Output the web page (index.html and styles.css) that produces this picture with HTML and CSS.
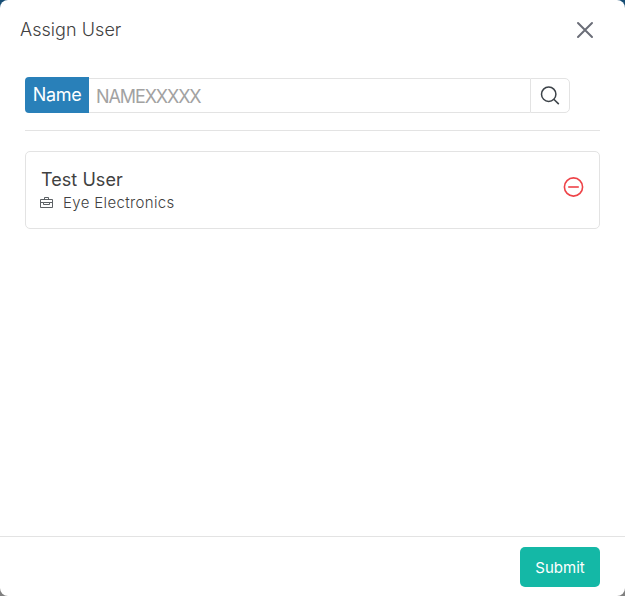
FILE: index.html
```html
<!DOCTYPE html>
<html lang="en">
<head>
<meta charset="utf-8">
<title>Assign User</title>
<link rel="stylesheet" href="styles.css">
</head>
<body>
<section class="modal">
  <header class="modal-header">
    <h1 class="title">Assign User</h1>
    <button class="close" aria-label="Close">
      <svg width="18" height="18" viewBox="0 0 18 18"><path d="M2 2l14 14M16 2L2 16" fill="none" stroke="#6b6e78" stroke-width="2" stroke-linecap="round"/></svg>
    </button>
  </header>
  <main class="modal-body">
    <div class="search">
      <label class="search-label" for="name">Name</label>
      <input class="search-input" id="name" type="text" placeholder="NAMEXXXXX">
      <button class="search-button" aria-label="Search">
        <svg width="20" height="20" viewBox="0 0 20 20"><g fill="none" stroke="#3c4248" stroke-width="1.5"><circle cx="8.7" cy="8.2" r="7.2"/><path d="M13.8 13.3l5 4.8"/></g></svg>
      </button>
    </div>
    <article class="user">
      <div class="details">
        <h2 class="user-name">Test User</h2>
        <p class="company">
          <svg width="13" height="12" viewBox="0 0 13 12"><path d="M.5 2.5h12v8H.5zM4.5 2.5v-2h4v2M1 5.5h2.5v2h6v-2H12M3.5 5.5h6" fill="none" stroke="#4b4f54" stroke-width=".9"/></svg>
          <span>Eye Electronics</span>
        </p>
      </div>
      <button class="remove" aria-label="Remove user">
        <svg width="21" height="20" viewBox="0 0 21 20"><g fill="none" stroke="#ee4348" stroke-width="1.6"><circle cx="10.5" cy="10" r="9.1"/><path d="M5.2 10h10.6"/></g></svg>
      </button>
    </article>
  </main>
  <footer class="modal-footer">
    <button class="submit">Submit</button>
  </footer>
</section>
</body>
</html>
```
FILE: styles.css
```css
* { box-sizing: border-box; }
html { height: 100%; }
body {
  height: 100%;
  margin: 0;
  overflow: hidden;
  background: linear-gradient(#174e75 50%, #808080 50%);
  color: #414141;
  font-family: Inter, "Liberation Sans", sans-serif;
}
h1, h2, p { margin: 0; font-weight: 400; }
button { border: 0; padding: 0; background: none; font: inherit; }
svg { display: block; }
.modal {
  height: 596px;
  display: flex;
  flex-direction: column;
  background: #fff;
  border-radius: 8px;
}
.modal-header {
  height: 60px;
  display: flex;
  align-items: center;
  justify-content: space-between;
  padding: 0 31px 0 20px;
}
.title { font-size: 18px; line-height: 24px; font-weight: 300; letter-spacing: .05px; }
.modal-body { flex: 1; padding: 17px 25px; }
.search {
  height: 54px;
  display: flex;
  align-items: flex-start;
  padding-right: 30px;
  border-bottom: 1px solid #e3e3e3;
}
.search-label {
  width: 64px;
  height: 36px;
  border-radius: 4px 0 0 4px;
  background: #2980b9;
  color: #fff;
  font-size: 18px;
  line-height: 36px;
  letter-spacing: -.3px;
  text-align: center;
}
.search-input {
  flex: 1;
  min-width: 0;
  height: 35px;
  margin-top: 1px;
  padding: 2px 7px 0;
  border: solid #e3e3e3;
  border-width: 1px 0;
  font: 400 18px Inter, "Liberation Sans", sans-serif;
  letter-spacing: -1.1px;
}
.search-input::placeholder { color: #a2a2a2; opacity: 1; }
.search-button {
  width: 40px;
  height: 35px;
  margin-top: 1px;
  display: grid;
  place-items: center;
  border: 1px solid #e3e3e3;
  border-radius: 0 5px 5px 0;
}
.user {
  height: 78px;
  margin-top: 20px;
  padding: 0 15px 0 14px;
  display: flex;
  align-items: center;
  justify-content: space-between;
  border: 1px solid #e3e3e3;
  border-radius: 5px;
}
.details { padding-top: 2px; }
.user-name { padding-left: 1px; font-size: 18px; line-height: 24px; letter-spacing: .05px; }
.company {
  display: flex;
  align-items: center;
  gap: 10px;
  font-size: 15px;
  line-height: 22px;
  font-weight: 300;
  letter-spacing: .35px;
}
.remove { margin-top: -6px; }
.modal-footer {
  height: 60px;
  display: flex;
  justify-content: flex-end;
  padding: 10px 25px;
  border-top: 1px solid #e3e3e3;
}
.submit {
  width: 80px;
  height: 40px;
  border-radius: 5px;
  background: #14b8a6;
  color: #fff;
  font-size: 15px;
}
```
